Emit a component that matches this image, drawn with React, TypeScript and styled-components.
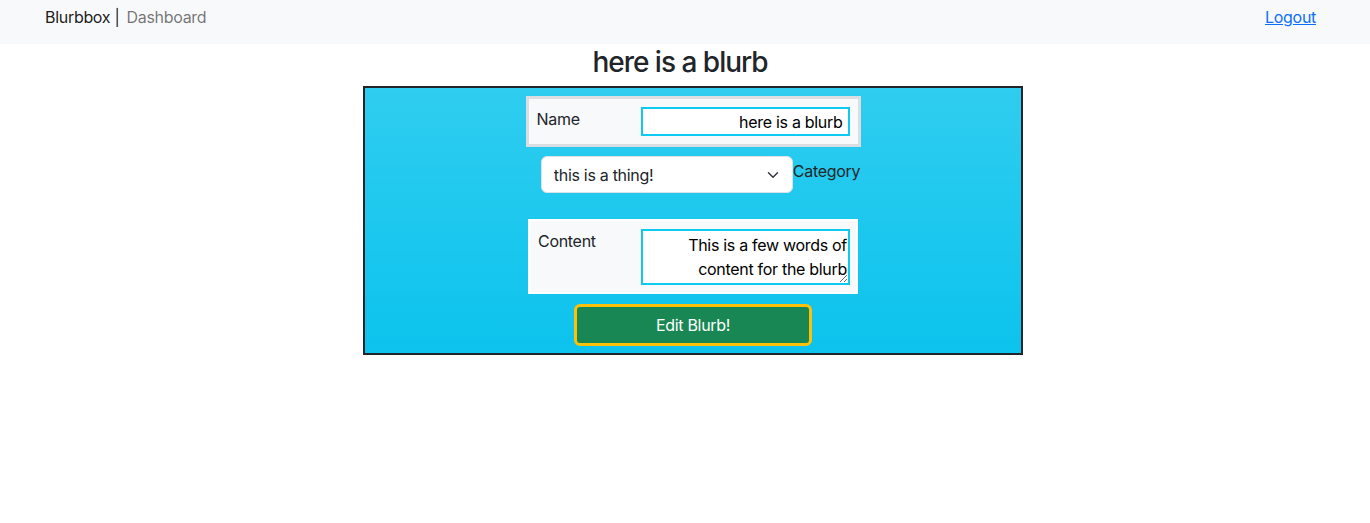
import React from "react";
import styled, { createGlobalStyle } from "styled-components";

const GlobalStyle = createGlobalStyle`
  html, body { margin: 0; padding: 0; background: #fff; }
  body {
    font-family: Inter, "Noto Sans", "Liberation Sans", sans-serif;
    font-size: 16px;
    line-height: 1.5;
    letter-spacing: -0.3px;
    color: #212529;
  }
  * { box-sizing: border-box; }
`;

const NavBar = styled.nav`
  height: 44px;
  background: #f8f9fa;
  display: flex;
  justify-content: space-between;
  align-items: flex-start;
  padding: 5px 54px 0 45px;
`;

const NavLeft = styled.div`
  display: flex;
  align-items: center;
  line-height: 24px;
`;

const Brand = styled.span`
  color: rgba(0, 0, 0, 0.9);
`;

const NavLink = styled.a`
  margin-left: 7px;
  color: rgba(0, 0, 0, 0.55);
  text-decoration: none;
`;

const Logout = styled.a`
  color: #0d6efd;
  text-decoration: underline;
  line-height: 24px;
`;

const Title = styled.h3`
  margin: 1px 0 7px;
  padding-right: 10px;
  font-size: 28px;
  font-weight: 500;
  line-height: 34px;
  letter-spacing: -1px;
  text-align: center;
  color: #212529;
`;

const Wrap = styled.div`
  display: flex;
  justify-content: center;
  padding-left: 16px;
`;

const Panel = styled.form`
  width: 660px;
  border: 2px solid #212529;
  background: linear-gradient(180deg, #2fcdef 0%, #0cc3ed 100%);
  padding: 8px 0 7px;
  display: flex;
  flex-direction: column;
  align-items: center;
`;

const FieldRow = styled.div<{ $border: string; $width: number; $pr: number; $pb: number; $mt: number }>`
  width: ${(p) => p.$width}px;
  margin-top: ${(p) => p.$mt}px;
  border: ${(p) => p.$border};
  background: #f8f9fa;
  padding: 8px ${(p) => p.$pr}px ${(p) => p.$pb}px 8px;
  display: flex;
  align-items: flex-start;
`;

const FieldLabel = styled.label<{ $w: number }>`
  width: ${(p) => p.$w}px;
  flex: none;
  line-height: 24px;
  color: #212529;
`;

const TextInput = styled.input`
  width: 209px;
  height: 29px;
  border: 2px solid #0dcaf0;
  border-radius: 0;
  outline: none;
  background: #fff;
  padding: 0 5px;
  text-align: right;
  font: inherit;
  font-size: 16px;
  letter-spacing: -0.3px;
  color: #000;
`;

const SelectRow = styled.div`
  display: flex;
  align-items: flex-start;
  margin-top: 9px;
  margin-left: 15px;
`;

const SelectWrap = styled.div`
  position: relative;
  width: 252px;
  height: 37px;
`;

const Select = styled.select`
  width: 100%;
  height: 100%;
  appearance: none;
  -webkit-appearance: none;
  border: 1px solid #dee2e6;
  border-radius: 6px;
  background: #fff;
  padding: 0 36px 0 12px;
  font: inherit;
  font-size: 16px;
  letter-spacing: -0.3px;
  color: #212529;
  outline: none;
`;

const Chevron = styled.svg`
  position: absolute;
  right: 13px;
  top: 50%;
  margin-top: -6px;
  width: 14px;
  height: 12px;
  pointer-events: none;
`;

const SideLabel = styled.label`
  padding-top: 3px;
  line-height: 24px;
  color: #212529;
`;

const TextArea = styled.textarea`
  width: 209px;
  height: 56px;
  border: 2px solid #0dcaf0;
  border-radius: 0;
  outline: none;
  background: #fff;
  padding: 2px 1px 0 2px;
  text-align: right;
  font: inherit;
  font-size: 16px;
  line-height: 24px;
  letter-spacing: -0.3px;
  color: #000;
  resize: both;
  overflow: hidden;
`;

const SubmitButton = styled.button`
  margin-top: 10px;
  width: 238px;
  height: 42px;
  border: 3px solid #ffc107;
  border-radius: 6px;
  background: #198754;
  color: #fff;
  font: inherit;
  font-size: 16px;
  letter-spacing: -0.3px;
  cursor: pointer;
`;

export default function App() {
  return (
    <>
      <GlobalStyle />
      <NavBar>
        <NavLeft>
          <Brand>Blurbbox |</Brand>
          <NavLink href="#">Dashboard</NavLink>
        </NavLeft>
        <Logout href="#">Logout</Logout>
      </NavBar>
      <Title>here is a blurb</Title>
      <Wrap>
        <Panel onSubmit={(e) => e.preventDefault()}>
          <FieldRow $border="3px solid #dadee2" $width={335} $pr={8} $pb={8} $mt={0}>
            <FieldLabel $w={104}>Name</FieldLabel>
            <TextInput defaultValue="here is a blurb" />
          </FieldRow>
          <SelectRow>
            <SelectWrap>
              <Select defaultValue="thing">
                <option value="thing">this is a thing!</option>
              </Select>
              <Chevron viewBox="0 0 16 16">
                <path
                  d="M2 5l6 6 6-6"
                  fill="none"
                  stroke="#343a40"
                  strokeWidth="2"
                  strokeLinecap="round"
                  strokeLinejoin="round"
                />
              </Chevron>
            </SelectWrap>
            <SideLabel>Category</SideLabel>
          </SelectRow>
          <FieldRow $border="2px solid #ffffff" $width={330} $pr={6} $pb={7} $mt={26}>
            <FieldLabel $w={103}>Content</FieldLabel>
            <TextArea defaultValue="This is a few words of content for the blurb" />
          </FieldRow>
          <SubmitButton type="submit">Edit Blurb!</SubmitButton>
        </Panel>
      </Wrap>
    </>
  );
}
